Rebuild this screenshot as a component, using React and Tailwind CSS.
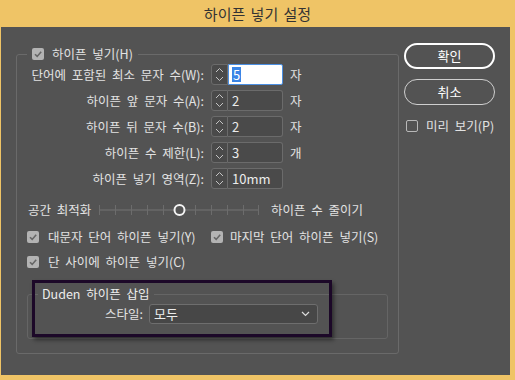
import React from 'react';

const Check = ({ checked }) => (
  <span
    className={`w-[12px] h-[12px] rounded-[2px] flex items-center justify-center shrink-0 ${
      checked ? 'bg-[#b3b3b3]' : 'border border-[#b8b8b8]'
    }`}
  >
    {checked && (
      <svg width="10" height="10" viewBox="0 0 10 10">
        <path d="M2 5.2 L4.2 7.4 L8.2 2.8" fill="none" stroke="#666" strokeWidth="1.6" />
      </svg>
    )}
  </span>
);

const Arrows = () => (
  <svg width="9" height="15" viewBox="0 0 9 15">
    <path d="M1 5 L4.5 1.5 L8 5" fill="none" stroke="#c4c4c4" strokeWidth="1" />
    <path d="M1 10 L4.5 13.5 L8 10" fill="none" stroke="#c4c4c4" strokeWidth="1" />
  </svg>
);

const Spinner = ({ value, focused }) => (
  <div className="flex h-[21px] w-[72px] text-[13px]">
    <div className="w-[17px] flex items-center justify-center border border-[#6b6b6b] rounded-l-[3px] bg-[#4a4a4a]">
      <Arrows />
    </div>
    {focused ? (
      <div className="flex-1 flex items-center bg-white border border-[#4b8fe2] rounded-r-[2px] pl-[3px]">
        <span className="bg-[#3a85e6] text-white leading-[15px] px-[1px]">{value}</span>
      </div>
    ) : (
      <div className="flex-1 flex items-center bg-[#4a4a4a] border border-l-0 border-[#6b6b6b] rounded-r-[3px] pl-[4px] text-[#ececec]">
        {value}
      </div>
    )}
  </div>
);

const rows = [
  { label: '단어에 포함된 최소 문자 수(W):', value: '5', unit: '자', focused: true },
  { label: '하이픈 앞 문자 수(A):', value: '2', unit: '자' },
  { label: '하이픈 뒤 문자 수(B):', value: '2', unit: '자' },
  { label: '하이픈 수 제한(L):', value: '3', unit: '개' },
  { label: '하이픈 넣기 영역(Z):', value: '10mm', unit: '' },
];

const Slider = () => {
  const ticks = [4, 20, 36, 52, 68, 100, 116, 132, 148, 163];
  return (
    <svg width="168" height="20" viewBox="0 0 168 20">
      <line x1="4" y1="10" x2="163" y2="10" stroke="#747474" strokeWidth="1" />
      {ticks.map((x) => (
        <line key={x} x1={x + 0.5} y1="5" x2={x + 0.5} y2="15" stroke="#6c6c6c" strokeWidth="1" />
      ))}
      <circle cx="84.5" cy="10" r="5" fill="#535353" stroke="#f4f4f4" strokeWidth="2" />
    </svg>
  );
};

export default function App() {
  return (
    <div className="w-[515px] h-[380px] bg-[#efc466] flex flex-col overflow-hidden font-['Noto_Sans_CJK_KR','Noto_Sans',sans-serif] text-[12.5px] leading-[16px] [word-spacing:3px] text-[#e2e2e2]">
      <div className="h-[27px] shrink-0 flex items-center justify-center text-[15px] [word-spacing:2px] text-[#333]">
        하이픈 넣기 설정
      </div>
      <div className="flex-1 ml-[1px] mr-[5px] mb-[5px] bg-[#535353] flex items-start">
        <fieldset className="ml-[15px] mt-[20px] w-[383px] h-[307px] border border-[#6a6a6a] rounded-[3px]">
          <legend className="ml-[10px] px-[5px] h-[14px] flex items-center gap-[8px]">
            <Check checked />
            <span>하이픈 넣기(H)</span>
          </legend>

          <div className="pt-[3px] grid grid-cols-[187px_72px_auto] gap-x-[7px] gap-y-[5px] items-center">
            {rows.map((r) => (
              <React.Fragment key={r.label}>
                <span className="text-right">{r.label}</span>
                <Spinner value={r.value} focused={r.focused} />
                <span>{r.unit}</span>
              </React.Fragment>
            ))}
          </div>

          <div className="mt-[11px] h-[20px] flex items-center pl-[11px]">
            <span className="w-[67px]">공간 최적화</span>
            <Slider />
            <span className="ml-[8px]">하이픈 수 줄이기</span>
          </div>

          <div className="mt-[9px] h-[16px] flex items-center pl-[10px]">
            <div className="w-[184px] flex items-center gap-[9px]">
              <Check checked />
              <span>대문자 단어 하이픈 넣기(Y)</span>
            </div>
            <div className="flex items-center gap-[7px]">
              <Check checked />
              <span>마지막 단어 하이픈 넣기(S)</span>
            </div>
          </div>

          <div className="mt-[9px] h-[16px] flex items-center gap-[9px] pl-[10px]">
            <Check checked />
            <span>단 사이에 하이픈 넣기(C)</span>
          </div>

          <div className="relative mt-[17px] ml-[10px] w-[361px]">
            <fieldset className="h-[52px] border border-[#656565] rounded-[3px]">
              <legend className="ml-[10px] px-[4px] h-[14px] flex items-center text-[#ececec]">
                Duden 하이픈 삽입
              </legend>
              <div className="pt-[3px] flex items-center">
                <span className="w-[115px] text-right">스타일:</span>
                <div className="ml-[6px] w-[169px] h-[20px] flex items-center justify-between bg-[#474747] border border-[#6e6e6e] rounded-[3px] pl-[4px] pr-[7px] text-[13px] text-[#ececec]">
                  <span>모두</span>
                  <svg width="9" height="6" viewBox="0 0 9 6">
                    <path d="M1 1 L4.5 4.5 L8 1" fill="none" stroke="#dcdcdc" strokeWidth="1.2" />
                  </svg>
                </div>
              </div>
            </fieldset>
            <div className="absolute left-[5px] top-[-7px] w-[300px] h-[57px] border-[3px] border-[#1c0828] shadow-[2px_3px_4px_rgba(0,0,0,0.45)] pointer-events-none" />
          </div>
        </fieldset>

        <div className="ml-[5px] mt-[16px] flex flex-col text-[13px]">
          <button className="w-[91px] h-[26px] rounded-full border-2 border-white text-white flex items-center justify-center">
            확인
          </button>
          <button className="mt-[10px] w-[91px] h-[26px] rounded-full border border-[#cfcfcf] text-white flex items-center justify-center">
            취소
          </button>
          <div className="mt-[13px] ml-[2px] h-[16px] flex items-center gap-[8px] text-[12.5px]">
            <Check />
            <span>미리 보기(P)</span>
          </div>
        </div>
      </div>
    </div>
  );
}
